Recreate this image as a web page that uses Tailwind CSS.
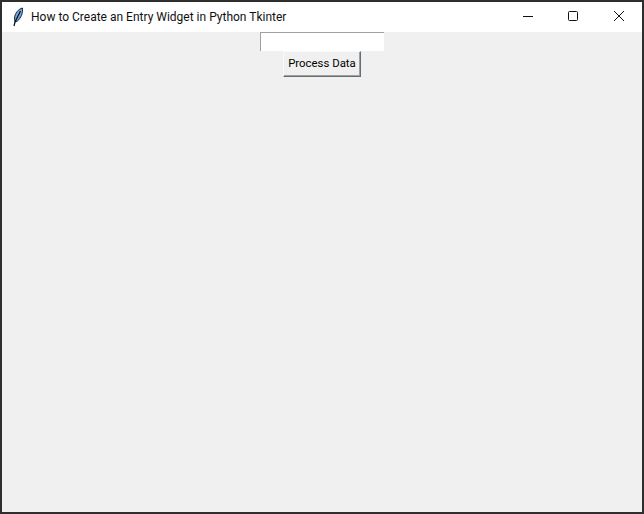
<!DOCTYPE html>
<html lang="en">
<head>
  <meta charset="UTF-8" />
  <title>How to Create an Entry Widget in Python Tkinter</title>
  <script src="https://cdn.jsdelivr.net/npm/@tailwindcss/browser@4"></script>
</head>
<body class="h-screen w-screen overflow-hidden bg-[#f0f0f0] font-['Roboto',sans-serif]">
  <div class="h-full w-full flex flex-col border-2 border-[#2e2e2e]">

    <!-- Title bar -->
    <div class="h-[30px] shrink-0 bg-white flex items-center">
      <svg class="ml-[8px] w-[16px] h-[20px]" viewBox="0 0 16 20">
        <path d="M12.5 1 C8.5 2 5 6 4.5 11 L5 15 L7.5 14 C11 11 13 6 12.5 1 Z" fill="#6fa8dc" stroke="#16243a" stroke-width="1"/>
        <path d="M10.5 4 L5 15 L4 19" fill="none" stroke="#0b0f18" stroke-width="1.2"/>
      </svg>
      <span class="ml-[5px] text-[12px] leading-none text-[#101010] whitespace-nowrap">How to Create an Entry Widget in Python Tkinter</span>
      <div class="ml-auto flex h-full">
        <button class="w-[46px] h-full flex items-center justify-center">
          <svg class="w-[10px] h-[10px] mb-[2px] ml-[2px]" viewBox="0 0 10 10"><path d="M0 5.5H10" stroke="#111" stroke-width="1"/></svg>
        </button>
        <button class="w-[46px] h-full flex items-center justify-center">
          <svg class="w-[10px] h-[10px] mb-[2px]" viewBox="0 0 10 10"><rect x="0.5" y="0.5" width="9" height="9" rx="1" fill="none" stroke="#111" stroke-width="1"/></svg>
        </button>
        <button class="w-[46px] h-full flex items-center justify-center">
          <svg class="w-[10px] h-[10px] mb-[2px]" viewBox="0 0 10 10"><path d="M0 0L10 10M10 0L0 10" stroke="#111" stroke-width="1"/></svg>
        </button>
      </div>
    </div>

    <!-- Window content -->
    <div class="flex-1 flex flex-col items-center">
      <input type="text" class="w-[124px] h-[19px] bg-white border-t border-l border-t-[#a0a0a0] border-l-[#a0a0a0] outline-none" />
      <button class="w-[78px] h-[26px] bg-[#f0f0f0] border border-t-[#fafafa] border-l-[#fafafa] border-r-[#646c74] border-b-[#646c74] shadow-[inset_-1px_-1px_0_#a0a0a0] text-[11.4px] text-black">Process Data</button>
    </div>
  </div>
</body>
</html>
